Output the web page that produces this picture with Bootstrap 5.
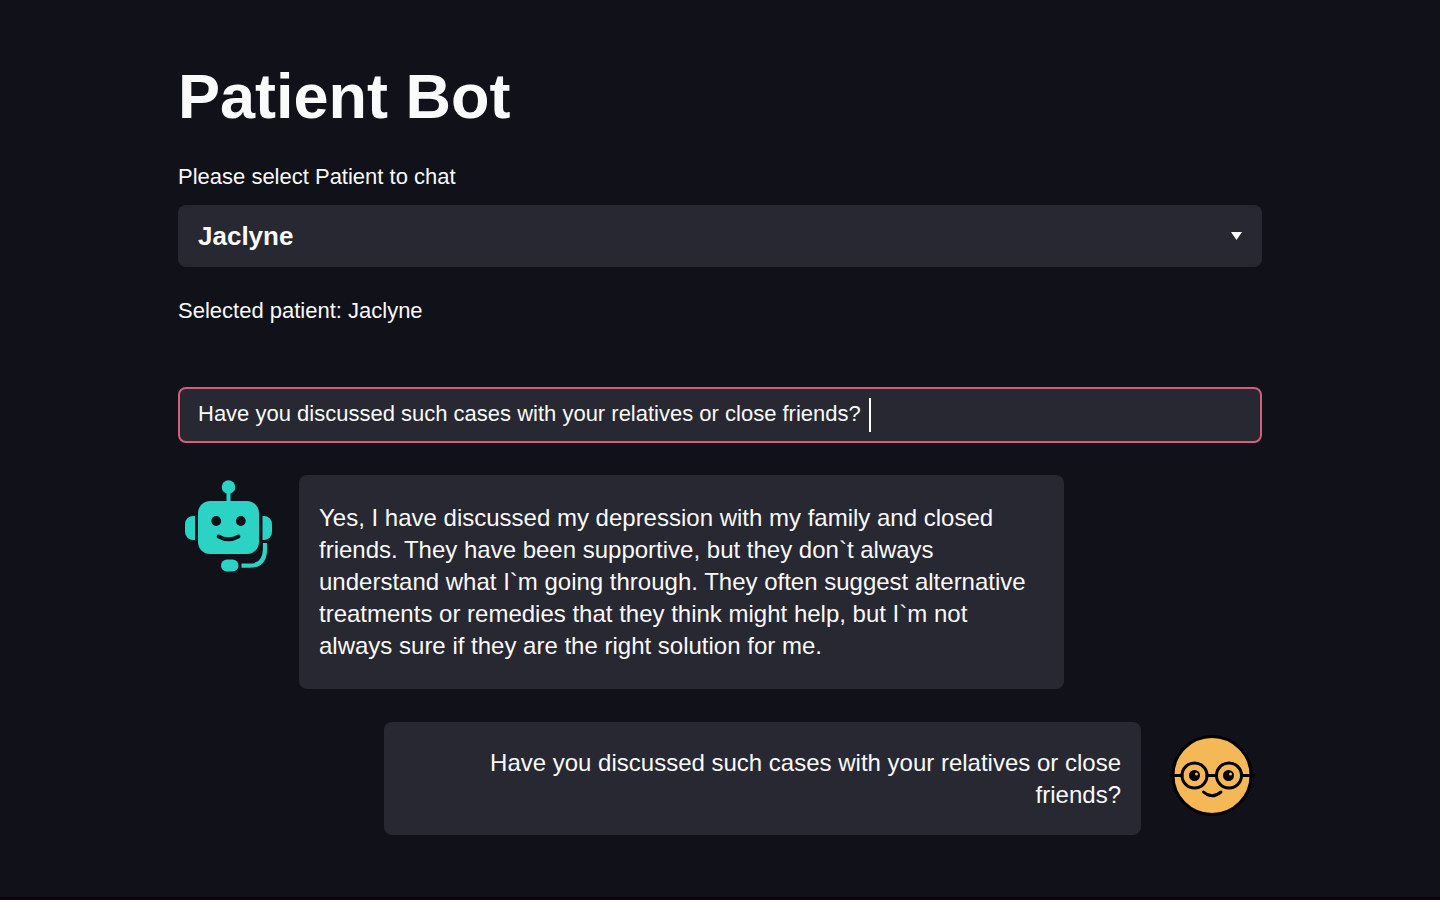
<!DOCTYPE html>
<html lang="en">
<head>
<meta charset="utf-8">
<meta name="viewport" content="width=device-width, initial-scale=1">
<title>Patient Bot</title>
<link href="https://cdn.jsdelivr.net/npm/bootstrap@5.3.0/dist/css/bootstrap.min.css" rel="stylesheet">
<style>
  body { background: #101119; color: #fafafa; font-family: "Liberation Sans", Arial, sans-serif; border-bottom: 3px solid #0c030c; }
  .page { max-width: 1084px; padding: 58px 0 60px; }
  .title { font-size: 63px; line-height: 76px; margin-bottom: 27px; }
  .text-line { font-size: 22px; line-height: 32px; }
  .patient-label { margin-bottom: 12px; }
  .patient-status { margin: 28px 0 60px; }
  .field { background-color: #272831; color: #fafafa; border-radius: 8px; }
  .patient-select { height: 62px; border: 0; padding: 0 60px 0 20px; font-size: 26px; font-weight: 700;
    background-image: url("data:image/svg+xml,%3Csvg xmlns='http://www.w3.org/2000/svg' viewBox='0 0 11 8'%3E%3Cpath fill='%23fff' d='M0 0h11L5.5 8z'/%3E%3C/svg%3E");
    background-size: 11px 8px; background-position: right 20px center; }
  .question { height: 56px; border: 2px solid #d0607a; padding: 0 18px 2px; font-size: 22px; }
  .field:focus { background-color: #272831; color: #fafafa; border-color: #d0607a; box-shadow: none; }
  .caret { position: absolute; left: 691px; top: 11px; width: 2px; height: 34px; background: #fff; }
  .chat { gap: 33px; margin-top: 32px; }
  .message { gap: 21px; }
  .bubble { background: #272831; border-radius: 8px; font-size: 24px; line-height: 32px; padding: 27px 20px; }
  .bot-bubble { width: 765px; }
  .user-bubble { width: 757px; padding: 25px 20px 24px; }
  .avatar { width: 100px; height: 100px; }
</style>
</head>
<body class="min-vh-100">
<main class="page container">
  <h1 class="title fw-bold">Patient Bot</h1>
  <label for="patient" class="text-line patient-label d-block">Please select Patient to chat</label>
  <select id="patient" class="form-select field patient-select">
    <option selected>Jaclyne</option>
  </select>
  <p class="text-line patient-status">Selected patient: Jaclyne</p>
  <form class="position-relative">
    <input type="text" class="form-control field question" aria-label="Question" value="Have you discussed such cases with your relatives or close friends?">
    <span class="caret" aria-hidden="true"></span>
  </form>
  <section class="chat d-flex flex-column" aria-label="Conversation">
    <div class="message d-flex align-items-start">
      <svg class="avatar flex-shrink-0" viewBox="0 0 100 100" role="img" aria-label="Bot">
        <g fill="#2bd3c5">
          <circle cx="50.500" cy="12" r="6.800"/>
          <path d="M48.500 16h4v12h-4z"/>
          <rect x="20" y="26" width="61" height="53" rx="12"/>
          <path d="M17 41v24h-1a8 8 0 0 1-9-8v-8a8 8 0 0 1 9-8zM84.500 41v24h1.500a8 8 0 0 0 8-8v-8a8 8 0 0 0-8-8z"/>
          <rect x="43" y="84.500" width="17.500" height="12" rx="6"/>
        </g>
        <path d="M63.500 90.700h8q15.500 0 15.500-17V68" fill="none" stroke="#2bd3c5" stroke-width="4.200"/>
        <circle cx="38.200" cy="46" r="4.900" fill="#101119"/>
        <circle cx="62.800" cy="46" r="4.900" fill="#101119"/>
        <path d="M40.500 61.500q10 5.500 20 0" fill="none" stroke="#101119" stroke-width="3.800" stroke-linecap="round"/>
      </svg>
      <div class="bubble bot-bubble">Yes, I have discussed my depression with my family and closed friends. They have been supportive, but they don`t always understand what I`m going through. They often suggest alternative treatments or remedies that they think might help, but I`m not always sure if they are the right solution for me.</div>
    </div>
    <div class="message d-flex align-items-center justify-content-end">
      <div class="bubble user-bubble text-end">Have you discussed such cases with your relatives or close friends?</div>
      <svg class="avatar flex-shrink-0" viewBox="0 4 100 100" role="img" aria-label="You">
        <g stroke="#000" stroke-width="3" fill="none" stroke-linecap="round">
          <circle cx="50" cy="50.500" r="39" fill="#f4b956"/>
          <path d="M9 50.500h11M45 50.500h9M79.500 50.500h12"/>
          <circle cx="32.500" cy="50.500" r="12.500"/>
          <circle cx="67" cy="50.500" r="12.500"/>
          <path d="M41.500 67q8.500 7.500 17.500 0"/>
        </g>
        <circle cx="32.500" cy="50.500" r="5.500"/><circle cx="66.500" cy="50.500" r="5.500"/>
        <circle cx="34.500" cy="49" r="1.500" fill="#f4b956"/><circle cx="68.500" cy="49" r="1.500" fill="#f4b956"/>
      </svg>
    </div>
  </section>
</main>
<script src="https://cdn.jsdelivr.net/npm/bootstrap@5.3.0/dist/js/bootstrap.bundle.min.js"></script>
</body>
</html>
